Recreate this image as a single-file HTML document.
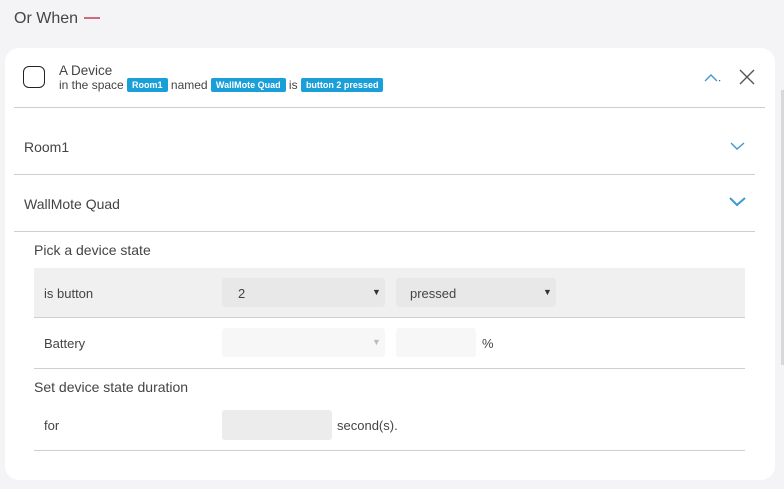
<!DOCTYPE html>
<html><head><style>
*{margin:0;padding:0;box-sizing:border-box}
body{width:784px;height:489px;background:#f4f4f7;font-family:"Liberation Sans",sans-serif;color:#444;position:relative;overflow:hidden}
.abs{position:absolute}
.card{left:5px;top:48px;width:770px;height:432px;background:#fff;border-radius:14px}
.tag{display:inline-block;background:#1a9fd8;color:#fff;font-size:9px;font-weight:bold;padding:2px 5px;border-radius:2px;vertical-align:1px}
.line{height:1px;background:#cfcfcf}
.sel{background:#ececec;border-radius:3px}
.t14{font-size:14px;color:#444}
.t13{font-size:13px;color:#444}
</style></head><body>
<div class="abs" style="left:14px;top:10px;font-size:16px;color:#444">Or When</div>
<div class="abs" style="left:84px;top:17px;width:16px;height:2px;background:#d06a7f"></div>
<div class="abs" style="left:781px;top:90px;width:3px;height:275px;background:#d8d8d8"></div>
<div class="abs card"></div>
<div class="abs" style="left:23px;top:66px;width:22px;height:22px;border:1.5px solid #222;border-radius:6px"></div>
<div class="abs" style="left:59px;top:63px;font-size:13.5px;color:#444">A Device</div>
<div class="abs" style="left:59px;top:78px;font-size:12px;color:#444;white-space:nowrap">in the space <span class="tag">Room1</span> named <span class="tag">WallMote Quad</span> is <span class="tag">button 2 pressed</span></div>
<svg class="abs" style="left:703px;top:72px" width="18" height="12"><path d="M2 9 L8 3 L14 9" fill="none" stroke="#3a9ad4" stroke-width="1.4"/><rect x="16" y="8" width="1.2" height="1.2" fill="#555"/></svg>
<svg class="abs" style="left:738px;top:68px" width="18" height="18"><path d="M2 2 L16 16 M16 2 L2 16" stroke="#555" stroke-width="1.4"/></svg>
<div class="abs line" style="left:14px;top:107px;width:751px"></div>
<div class="abs t14" style="left:24px;top:139px">Room1</div>
<svg class="abs" style="left:729px;top:140px" width="18" height="12"><path d="M2 3 L8 9 L15 3" fill="none" stroke="#3a9ad4" stroke-width="1.4"/></svg>
<div class="abs line" style="left:14px;top:174px;width:741px"></div>
<div class="abs t14" style="left:24px;top:196px">WallMote Quad</div>
<svg class="abs" style="left:728px;top:196px" width="20" height="12"><path d="M2 2 L9 9 L17 2" fill="none" stroke="#3a9ad4" stroke-width="2"/></svg>
<div class="abs line" style="left:14px;top:231px;width:741px"></div>
<div class="abs t14" style="left:34px;top:242px">Pick a device state</div>
<div class="abs" style="left:34px;top:268px;width:711px;height:49px;background:#f0f0f0"></div>
<div class="abs line" style="left:34px;top:317px;width:711px"></div>
<div class="abs t13" style="left:44px;top:286px">is button</div>
<div class="abs sel" style="left:222px;top:278px;width:163px;height:29px;background:#e8e8e8"></div>
<div class="abs t13" style="left:238px;top:286px">2</div>
<div class="abs" style="left:372px;top:287px;font-size:9px;color:#333">▼</div>
<div class="abs sel" style="left:396px;top:278px;width:160px;height:29px;background:#e8e8e8"></div>
<div class="abs t13" style="left:410px;top:286px">pressed</div>
<div class="abs" style="left:543px;top:287px;font-size:9px;color:#333">▼</div>
<div class="abs t13" style="left:44px;top:336px">Battery</div>
<div class="abs sel" style="left:222px;top:328px;width:163px;height:29px;background:#f7f7f7"></div>
<div class="abs" style="left:372px;top:337px;font-size:9px;color:#bbb">▼</div>
<div class="abs sel" style="left:396px;top:328px;width:80px;height:29px;background:#f7f7f7"></div>
<div class="abs t13" style="left:482px;top:336px">%</div>
<div class="abs line" style="left:34px;top:368px;width:711px"></div>
<div class="abs t14" style="left:34px;top:379px">Set device state duration</div>
<div class="abs t13" style="left:44px;top:418px">for</div>
<div class="abs sel" style="left:222px;top:410px;width:110px;height:30px"></div>
<div class="abs t13" style="left:337px;top:418px">second(s).</div>
<div class="abs line" style="left:34px;top:450px;width:711px"></div>
</body></html>
